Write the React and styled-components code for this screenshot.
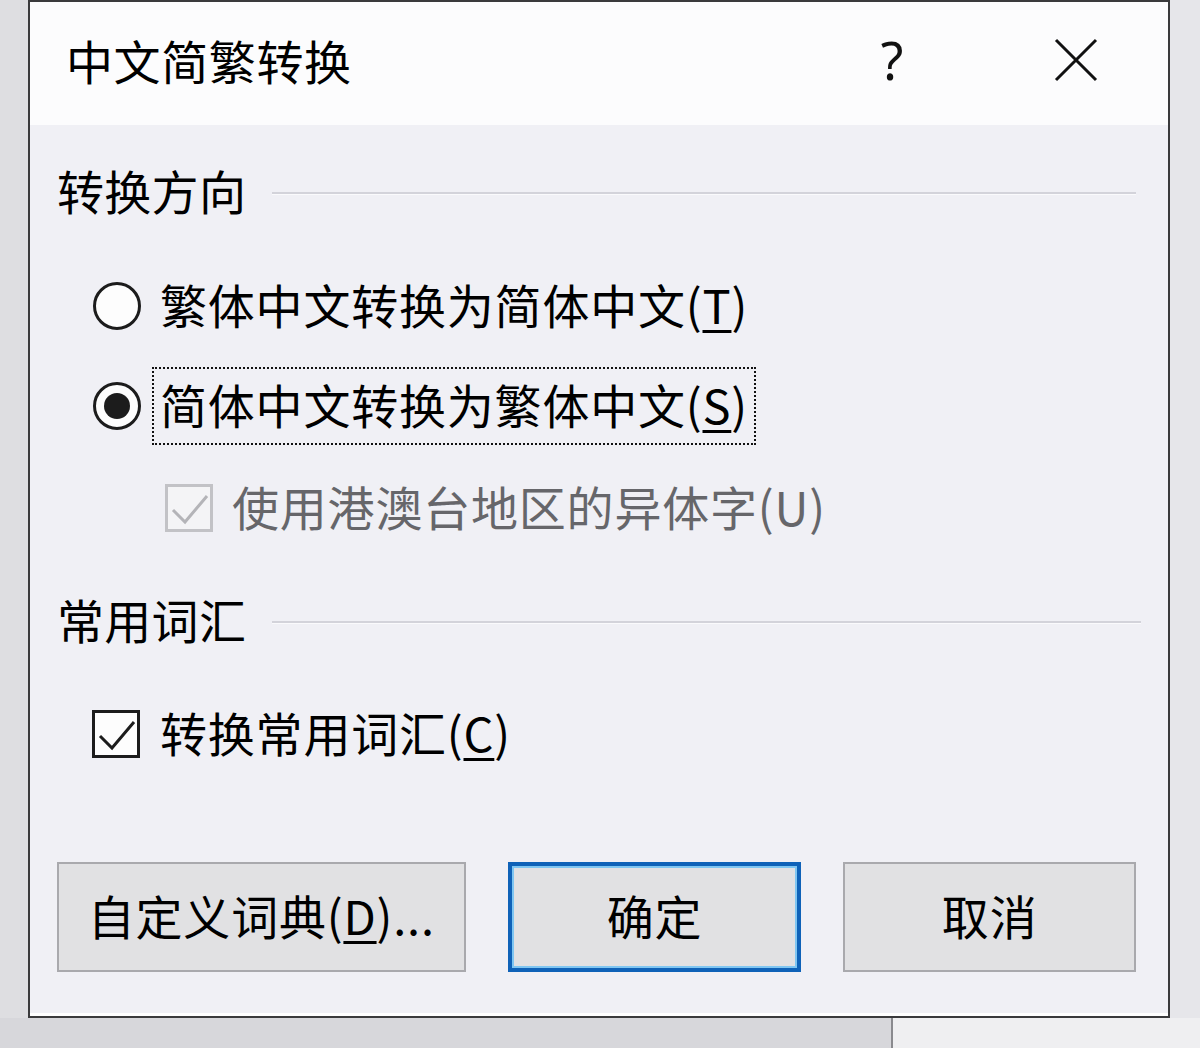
import React from "react";
import styled, { createGlobalStyle } from "styled-components";

const GlobalStyle = createGlobalStyle`
  html, body { margin: 0; padding: 0; }
  body {
    background: #dedee1;
    font-family: "Noto Sans CJK SC", "Noto Sans", sans-serif;
    color: #000;
  }
  * { box-sizing: border-box; }
`;

const Page = styled.div`
  width: 1200px;
  height: 1048px;
  overflow: hidden;
  display: flex;
  flex-direction: column;
  background: #dedee1;
`;

const Row = styled.div`
  display: flex;
`;

const Dialog = styled.div`
  margin-left: 28px;
  width: 1142px;
  height: 1018px;
  border: 2px solid #3a3a3c;
  display: flex;
  flex-direction: column;
  background: #f0f0f5;
  box-shadow: inset 0 -3px 0 #ffffff;
`;

const SideStrip = styled.div`
  flex: 1;
  background: #e6e6ea;
`;

const BottomStrip = styled.div`
  height: 30px;
  display: flex;
`;

const BottomLeft = styled.div`
  width: 893px;
  background: #d7d7db;
  border-right: 2px solid #8a8a8e;
`;

const BottomRight = styled.div`
  flex: 1;
  background: #efeff1;
`;

const TitleBar = styled.div`
  height: 123px;
  background: #fcfcfd;
  display: flex;
  align-items: center;
  padding-left: 36px;
  padding-bottom: 8px;
`;

const Title = styled.div`
  flex: 1;
  font-size: 47px;
  line-height: 60px;
  letter-spacing: 0.6px;
`;

const CaptionButton = styled.div`
  width: 184px;
  height: 100%;
  display: flex;
  align-items: center;
  justify-content: center;
  font-family: "Noto Sans", "DejaVu Sans", sans-serif;
  font-size: 52px;
  color: #111;
`;

const Body = styled.div`
  flex: 1;
  display: flex;
  flex-direction: column;
  padding: 38px 32px 44px 27px;
`;

const GroupHeader = styled.div`
  height: 60px;
  display: flex;
  align-items: center;
  margin-top: ${(p) => p.$top}px;
`;

const GroupLabel = styled.div`
  font-size: 47px;
  line-height: 60px;
  padding-bottom: 6px;
  letter-spacing: 0.3px;
`;

const GroupLine = styled.div`
  flex: 1;
  margin-left: 26px;
  margin-right: ${(p) => p.$right || 0}px;
  border-top: 2px solid #d3d3da;
  border-bottom: 1px solid #fafafc;
`;

const OptionRow = styled.div`
  height: 80px;
  display: flex;
  align-items: center;
  margin-top: ${(p) => p.$top}px;
  margin-left: ${(p) => p.$indent}px;
`;

const Radio = styled.div`
  width: 48px;
  height: 48px;
  border-radius: 50%;
  border: 3px solid #1c1c1c;
  background: #fdfdfd;
  display: flex;
  align-items: center;
  justify-content: center;
  flex-shrink: 0;
`;

const RadioDot = styled.div`
  width: 26px;
  height: 26px;
  border-radius: 50%;
  background: #1c1c1c;
`;

const OptionLabel = styled.div`
  margin-left: ${(p) => p.$gap}px;
  height: 78px;
  display: flex;
  align-items: center;
  padding: 0 6px 6px 6px;
  border: 2px ${(p) => (p.$focus ? "dotted #111" : "solid transparent")};
  font-size: 47px;
  letter-spacing: 0.8px;
  color: ${(p) => (p.$disabled ? "#66666a" : "#000")};
  white-space: nowrap;
`;

const Mnemonic = styled.span`
  text-decoration: underline;
  text-decoration-thickness: 3px;
  text-underline-offset: 6px;
`;

const ButtonRow = styled.div`
  margin-top: 88px;
  display: flex;
  gap: 42px;
`;

const Button = styled.div`
  width: ${(p) => p.$w}px;
  height: 110px;
  display: flex;
  align-items: center;
  justify-content: center;
  padding-bottom: 6px;
  background: #e1e1e3;
  border: ${(p) => (p.$default ? "4px solid #0f62b8" : "2px solid #a9a9ad")};
  box-shadow: ${(p) => (p.$default ? "inset 0 0 0 2px #7fc6f2" : "none")};
  font-size: 47px;
  letter-spacing: 0.8px;
  white-space: nowrap;
`;

const CheckBox = ({ checked, disabled }) => (
  <svg width="48" height="48" viewBox="0 0 48 48" style={{ flexShrink: 0 }}>
    <rect
      x="1.5"
      y="1.5"
      width="45"
      height="45"
      fill={disabled ? "#f4f4f6" : "#fdfdfd"}
      stroke={disabled ? "#c2c2c6" : "#1c1c1c"}
      strokeWidth="3"
    />
    {checked && (
      <path
        d="M8 26 L20 38 L42 12"
        fill="none"
        stroke={disabled ? "#b4b4b8" : "#1c1c1c"}
        strokeWidth="3"
      />
    )}
  </svg>
);

const CloseIcon = () => (
  <svg width="44" height="44" viewBox="0 0 44 44">
    <path d="M2 2 L42 42 M42 2 L2 42" stroke="#111" strokeWidth="3" fill="none" />
  </svg>
);

export default function App() {
  return (
    <Page>
      <GlobalStyle />
      <Row>
        <Dialog>
          <TitleBar>
            <Title>中文简繁转换</Title>
            <CaptionButton>?</CaptionButton>
            <CaptionButton>
              <CloseIcon />
            </CaptionButton>
          </TitleBar>
          <Body>
            <GroupHeader $top={0}>
              <GroupLabel>转换方向</GroupLabel>
              <GroupLine />
            </GroupHeader>

            <OptionRow $top={43} $indent={36}>
              <Radio />
              <OptionLabel $gap={11}>
                繁体中文转换为简体中文(<Mnemonic>T</Mnemonic>)
              </OptionLabel>
            </OptionRow>

            <OptionRow $top={20} $indent={36}>
              <Radio>
                <RadioDot />
              </Radio>
              <OptionLabel $gap={11} $focus>
                简体中文转换为繁体中文(<Mnemonic>S</Mnemonic>)
              </OptionLabel>
            </OptionRow>

            <OptionRow $top={22} $indent={108}>
              <CheckBox checked disabled />
              <OptionLabel $gap={11} $disabled>
                使用港澳台地区的异体字(U)
              </OptionLabel>
            </OptionRow>

            <GroupHeader $top={44}>
              <GroupLabel>常用词汇</GroupLabel>
              <GroupLine $right={-5} />
            </GroupHeader>

            <OptionRow $top={42} $indent={35}>
              <CheckBox checked />
              <OptionLabel $gap={12}>
                转换常用词汇(<Mnemonic>C</Mnemonic>)
              </OptionLabel>
            </OptionRow>

            <ButtonRow>
              <Button $w={409}>
                自定义词典(<Mnemonic>D</Mnemonic>)...
              </Button>
              <Button $w={294} $default>
                确定
              </Button>
              <Button $w={293}>取消</Button>
            </ButtonRow>
          </Body>
        </Dialog>
        <SideStrip />
      </Row>
      <BottomStrip>
        <BottomLeft />
        <BottomRight />
      </BottomStrip>
    </Page>
  );
}
